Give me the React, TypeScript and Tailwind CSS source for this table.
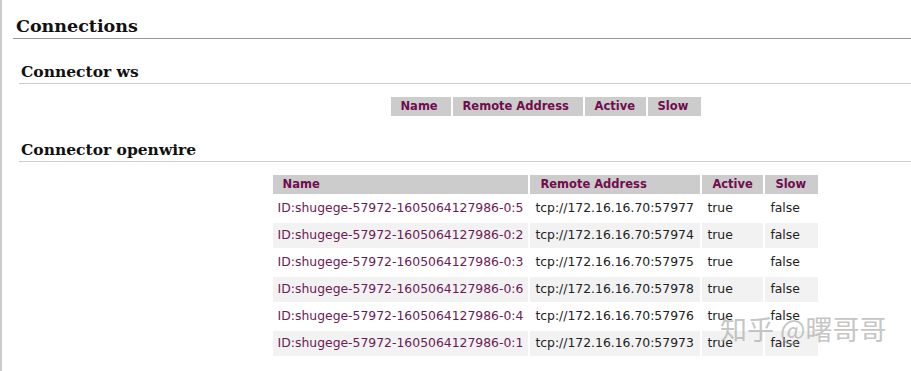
const connections = [
  { id: "ID:shugege-57972-1605064127986-0:5", addr: "tcp://172.16.16.70:57977" },
  { id: "ID:shugege-57972-1605064127986-0:2", addr: "tcp://172.16.16.70:57974" },
  { id: "ID:shugege-57972-1605064127986-0:3", addr: "tcp://172.16.16.70:57975" },
  { id: "ID:shugege-57972-1605064127986-0:6", addr: "tcp://172.16.16.70:57978" },
  { id: "ID:shugege-57972-1605064127986-0:4", addr: "tcp://172.16.16.70:57976" },
  { id: "ID:shugege-57972-1605064127986-0:1", addr: "tcp://172.16.16.70:57973" },
];

const serif = "font-['DejaVu_Serif',serif] font-bold text-[#111]";
const th =
  "bg-[#cccccc] text-[#700d4e] font-bold text-[11.5px] leading-[15px] py-[2px] pl-[10px] text-left whitespace-nowrap";
const td = "h-[25px] px-[5px] py-0 text-[12.4px] whitespace-nowrap";

const ConnectorHead = ({ title }: { title: string }) => (
  <h3 className={`${serif} text-[15.5px] leading-[20px] pl-[2px] pb-[1px] border-b border-[#cccccc]`}>
    {title}
  </h3>
);

const TableHead = ({ widths }: { widths: string[] }) => (
  <thead>
    <tr>
      {["Name", "Remote Address", "Active", "Slow"].map((label, i) => (
        <th key={label} className={`${th} ${widths[i]}`}>
          {label}
        </th>
      ))}
    </tr>
  </thead>
);

export default function App() {
  return (
    <div className="relative w-[911px] h-[371px] overflow-hidden bg-white border-l-2 border-[#cccccc] font-['DejaVu_Sans',sans-serif]">
      <div className="ml-[11px] w-[1100px] pt-[15px]">
        <h2 className={`${serif} text-[17.5px] leading-[22px] pl-[3px] pb-[1px] border-b border-[#999999]`}>
          Connections
        </h2>
      </div>

      <div className="ml-[17px] w-[1053px]">
        {/* ws connector, no clients */}
        <div className="mt-[23px]">
          <ConnectorHead title="Connector ws" />
          <table className="mx-auto mt-[11px] border-separate border-spacing-[2px]">
            <TableHead widths={["w-[60px]", "w-[130px]", "w-[61px]", "w-[53px]"]} />
            <tbody />
          </table>
        </div>

        {/* openwire connector */}
        <div className="mt-[22px]">
          <ConnectorHead title="Connector openwire" />
          <table className="mx-auto mt-[11px] border-separate border-spacing-[2px]">
            <TableHead widths={["w-[255px]", "w-[170px]", "w-[61px]", "w-[53px]"]} />
            <tbody>
              {connections.map((c, i) => (
                <tr key={c.id} className={i % 2 === 1 ? "bg-[#f2f2f2]" : "bg-white"}>
                  <td className={`${td} text-[#6b1b55]`}>{c.id}</td>
                  <td className={`${td} text-[#222]`}>{c.addr}</td>
                  <td className={`${td} text-[#222]`}>true</td>
                  <td className={`${td} text-[#222]`}>false</td>
                </tr>
              ))}
            </tbody>
          </table>
        </div>
      </div>

      {/* site watermark */}
      <div className="absolute left-[718px] top-[315px] text-[27px] leading-none text-[rgba(165,165,165,0.65)] font-['Noto_Sans_CJK_SC',sans-serif] whitespace-nowrap">
        知乎 @曙哥哥
      </div>
    </div>
  );
}
